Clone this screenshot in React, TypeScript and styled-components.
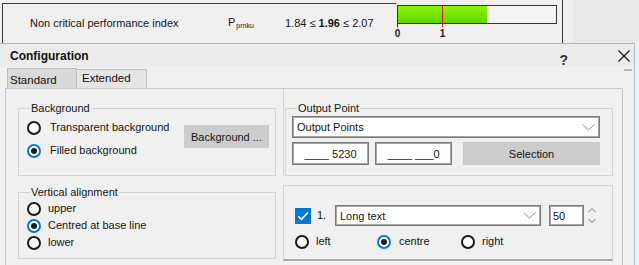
import React from "react";
import styled, { createGlobalStyle } from "styled-components";

const Global = createGlobalStyle`
  html, body { margin: 0; padding: 0; background: #f0f0f0; }
  body {
    font-family: "Liberation Sans", Arial, sans-serif;
    font-size: 11px;
    color: #151515;
  }
  * { box-sizing: border-box; }
`;

const Screen = styled.div`
  width: 639px;
  height: 265px;
  overflow: hidden;
  display: flex;
  flex-direction: column;
  background: #f0f0f0;
`;

/* ---------- report strip above the dialog ---------- */

const TopStrip = styled.div`
  height: 43px;
  flex: none;
  display: flex;
`;

const ReportFrame = styled.div`
  margin-left: 2px;
  width: 561px;
  border-right: 1px solid #3a3a3a;
  display: flex;
  align-items: flex-start;
`;

const TextCells = styled.div`
  margin-top: 3px;
  width: 394px;
  height: 40px;
  border-top: 1px solid #3a3a3a;
  border-left: 1px solid #3a3a3a;
  display: flex;
  align-items: center;
`;

const Cell = styled.div<{ $w: number; $pl?: number }>`
  width: ${(p) => p.$w}px;
  padding-left: ${(p) => p.$pl ?? 0}px;
  line-height: 13px;
  white-space: nowrap;
`;

const Sub = styled.sub`
  font-size: 7px;
  vertical-align: -2px;
  margin-left: 1px;
`;

const Strong = styled.b`
  font-weight: bold;
`;

const BarCell = styled.div`
  margin-left: 1px;
  padding-top: 5px;
  width: 160px;
`;

const RightFill = styled.div`
  flex: 1;
  margin-left: 10px;
  background: #e9e9e9;
`;

/* ---------- dialog ---------- */

const Dialog = styled.div`
  width: 635px;
  flex: 1;
  border-top: 1px solid #a9b8cf;
  border-right: 1px solid #a9c1e0;
  display: flex;
  flex-direction: column;
`;

const TitleBar = styled.div`
  height: 23px;
  flex: none;
  background: #ebebeb;
  display: flex;
  align-items: center;
  padding: 0 4px 0 10px;
`;

const Title = styled.div`
  font-weight: bold;
  font-size: 12px;
  color: #111;
`;

const Help = styled.div`
  margin-left: auto;
  font-weight: bold;
  font-size: 14px;
  line-height: 14px;
  padding-top: 9px;
  color: #333;
`;

const CloseBox = styled.div`
  margin-left: 50px;
  margin-top: 1px;
  width: 12px;
  height: 12px;
  display: flex;
`;

const TabStrip = styled.div`
  height: 21px;
  flex: none;
  display: flex;
  align-items: flex-end;
  padding-left: 7px;
`;

const Tab = styled.div<{ $active?: boolean }>`
  width: 70px;
  height: ${(p) => (p.$active ? 20 : 19)}px;
  background: ${(p) => (p.$active ? "#d9d9d9" : "#e5e5e5")};
  border: 1px solid #bdbdbd;
  border-bottom: none;
  border-left: ${(p) => (p.$active ? "1px solid #bdbdbd" : "none")};
  display: flex;
  align-items: flex-end;
  padding-left: ${(p) => (p.$active ? 2 : 5)}px;
  padding-bottom: ${(p) => (p.$active ? 1 : 3)}px;
  line-height: 13px;
  font-size: 11.5px;
  color: #111;
`;

const GripDash = styled.div`
  margin-left: auto;
  margin-right: 2px;
  align-self: flex-start;
  margin-top: 2px;
  width: 8px;
  height: 2px;
  background: #b8b8b8;
`;

const TabPanel = styled.div`
  margin-left: 5px;
  width: 618px;
  flex: 1;
  border: 1px solid #c6c6c6;
  border-bottom: none;
  display: grid;
  grid-template-columns: 258px 330px;
  column-gap: 7px;
  align-content: start;
  padding-left: 12px;
`;

const Column = styled.div`
  display: flex;
  flex-direction: column;
`;

const LeftColumn = styled(Column)`
  padding-top: 19px;
`;

const GroupBox = styled.div<{ $h: number; $mt?: number; $w?: number; $pl?: number }>`
  position: relative;
  height: ${(p) => p.$h}px;
  width: ${(p) => (p.$w ? `${p.$w}px` : "auto")};
  margin-top: ${(p) => p.$mt ?? 0}px;
  border: 1px solid #d4d4d4;
  padding: 7px 6px 0 ${(p) => p.$pl ?? 8}px;
`;

const Legend = styled.span`
  position: absolute;
  top: -8px;
  left: 11px;
  padding: 0 1px;
  line-height: 14px;
  background: #f0f0f0;
  color: #151515;
`;

const GroupInner = styled.div`
  display: flex;
  justify-content: space-between;
  align-items: flex-start;
`;

const RadioStack = styled.div`
  display: flex;
  flex-direction: column;
`;

const RadioRow = styled.div<{ $h: number; $gap: number }>`
  height: ${(p) => p.$h}px;
  display: flex;
  align-items: center;
  gap: ${(p) => p.$gap}px;
  white-space: nowrap;
  line-height: 13px;
`;

const RadioCircle = styled.span<{ $on?: boolean }>`
  flex: none;
  width: 14px;
  height: 14px;
  border-radius: 50%;
  border: 2px solid ${(p) => (p.$on ? "#0078d7" : "#1a1a1a")};
  background: #fff;
  display: flex;
  align-items: center;
  justify-content: center;
  &::after {
    content: "";
    display: ${(p) => (p.$on ? "block" : "none")};
    width: 6px;
    height: 6px;
    border-radius: 50%;
    background: #1a1a1a;
  }
`;

const FlatButton = styled.div<{ $w: number; $mt?: number; $ml?: number }>`
  flex: none;
  width: ${(p) => p.$w}px;
  height: 23px;
  margin-top: ${(p) => p.$mt ?? 0}px;
  margin-left: ${(p) => p.$ml ?? 0}px;
  background: #cccccc;
  border: 1px solid #cccccc;
  display: flex;
  align-items: center;
  justify-content: center;
  color: #151515;
`;

const TopRight = styled.div`
  height: 87px;
  border-left: 1px solid #d4d4d4;
  padding: 19px 0 0 1px;
`;

const Field = styled.div<{ $w: number; $h: number; $ml?: number; $pl?: number }>`
  flex: none;
  width: ${(p) => p.$w}px;
  height: ${(p) => p.$h}px;
  margin-left: ${(p) => p.$ml ?? 0}px;
  background: #fff;
  border: 1px solid #7a7a7a;
  box-shadow: inset 0 0 0 1px #a6a6a6;
  display: flex;
  align-items: center;
  padding: 0 4px 0 ${(p) => p.$pl ?? 4}px;
  white-space: nowrap;
  color: #151515;
`;

const ComboText = styled.span`
  flex: 1;
`;

const CenterText = styled.span`
  flex: 1;
  text-align: center;
`;

const FieldRow = styled.div`
  margin-top: 4px;
  display: flex;
  align-items: center;
  gap: 6px;
`;

const LowerBox = styled.div`
  margin-top: 9px;
  height: 76px;
  border: 1px solid #d4d4d4;
  border-bottom: 2px solid #ababab;
  padding: 19px 0 0 11px;
`;

const LineRow = styled.div`
  height: 21px;
  display: flex;
  align-items: center;
`;

const NumLabel = styled.span`
  margin-left: 6px;
  width: 18px;
  line-height: 13px;
`;

const AlignGrid = styled.div`
  margin-top: 7px;
  display: grid;
  grid-template-columns: 82px 84px auto;
`;

const Chevron = () => (
  <svg width="13" height="7" viewBox="0 0 13 7">
    <polyline points="0.5,0.5 6.5,6 12.5,0.5" fill="none" stroke="#8c8c8c" strokeWidth="1" />
  </svg>
);

const Spinner = () => (
  <svg width="8" height="17" viewBox="0 0 8 17" style={{ marginLeft: 4 }}>
    <polyline points="0.5,5 4,1.5 7.5,5" fill="none" stroke="#a8a8a8" strokeWidth="1.2" />
    <polyline points="0.5,12 4,15.5 7.5,12" fill="none" stroke="#a8a8a8" strokeWidth="1.2" />
  </svg>
);

const CheckBox = () => (
  <svg width="16" height="16" viewBox="0 0 16 16">
    <rect x="0" y="0" width="16" height="16" fill="#0078d7" />
    <polyline points="3.2,8.2 6.4,11.4 12.8,4.6" fill="none" stroke="#fff" strokeWidth="1.6" />
  </svg>
);

const Radio = ({ on, label, h, gap }: { on?: boolean; label: string; h: number; gap: number }) => (
  <RadioRow $h={h} $gap={gap}>
    <RadioCircle $on={on} />
    <span>{label}</span>
  </RadioRow>
);

const PerformanceBar = () => (
  <svg width="160" height="38" viewBox="0 0 160 38" style={{ overflow: "visible", display: "block" }}>
    <defs>
      <linearGradient id="gbar" x1="0" y1="0" x2="0" y2="1">
        <stop offset="0" stopColor="#8cf500" />
        <stop offset="1" stopColor="#5fd600" />
      </linearGradient>
    </defs>
    <rect x="0.5" y="0.5" width="159" height="18" fill="#f4f4f4" stroke="#333" />
    <rect x="1" y="1" width="89" height="17" fill="url(#gbar)" />
    <line x1="45.5" y1="1" x2="45.5" y2="22.5" stroke="#e01818" strokeWidth="1" />
    <line x1="0.5" y1="18" x2="0.5" y2="22.5" stroke="#333" strokeWidth="1" />
    <text x="0.5" y="32" fontSize="10" fontWeight="bold" textAnchor="middle" fill="#222"
      fontFamily="Liberation Sans, Arial, sans-serif">0</text>
    <text x="45.5" y="32" fontSize="10" fontWeight="bold" textAnchor="middle" fill="#222"
      fontFamily="Liberation Sans, Arial, sans-serif">1</text>
  </svg>
);

export default function App() {
  return (
    <>
      <Global />
      <Screen>
        <TopStrip>
          <ReportFrame>
            <TextCells>
              <Cell $w={225} $pl={27}>Non critical performance index</Cell>
              <Cell $w={57}>
                P<Sub>prnku</Sub>
              </Cell>
              <Cell $w={111}>
                1.84 ≤ <Strong>1.96</Strong> ≤ 2.07
              </Cell>
            </TextCells>
            <BarCell>
              <PerformanceBar />
            </BarCell>
          </ReportFrame>
          <RightFill />
        </TopStrip>

        <Dialog>
          <TitleBar>
            <Title>Configuration</Title>
            <Help>?</Help>
            <CloseBox>
              <svg width="12" height="12" viewBox="0 0 12 12">
                <line x1="0.5" y1="0.5" x2="11.5" y2="11.5" stroke="#1e1e1e" strokeWidth="1.3" />
                <line x1="11.5" y1="0.5" x2="0.5" y2="11.5" stroke="#1e1e1e" strokeWidth="1.3" />
              </svg>
            </CloseBox>
          </TitleBar>

          <TabStrip>
            <Tab $active>Standard</Tab>
            <Tab>Extended</Tab>
            <GripDash />
          </TabStrip>

          <TabPanel>
            <LeftColumn>
              <GroupBox $h={68}>
                <Legend>Background</Legend>
                <GroupInner>
                  <RadioStack>
                    <Radio label="Transparent background" h={23} gap={9} />
                    <Radio on label="Filled background" h={23} gap={9} />
                  </RadioStack>
                  <FlatButton $w={85} $mt={9}>Background ...</FlatButton>
                </GroupInner>
              </GroupBox>

              <GroupBox $h={67} $mt={16}>
                <Legend>Vertical alignment</Legend>
                <RadioStack>
                  <Radio label="upper" h={17} gap={7} />
                  <Radio on label="Centred at base line" h={17} gap={7} />
                  <Radio label="lower" h={17} gap={7} />
                </RadioStack>
              </GroupBox>
            </LeftColumn>

            <Column>
              <TopRight>
                <GroupBox $h={68} $w={328} $pl={6}>
                  <Legend>Output Point</Legend>
                  <Field $w={308} $h={22}>
                    <ComboText>Output Points</ComboText>
                    <Chevron />
                  </Field>
                  <FieldRow>
                    <Field $w={77} $h={23}>
                      <CenterText>____ 5230</CenterText>
                    </Field>
                    <Field $w={77} $h={23}>
                      <CenterText>____ ___0</CenterText>
                    </Field>
                    <FlatButton $w={137} $ml={5}>Selection</FlatButton>
                  </FieldRow>
                </GroupBox>
              </TopRight>

              <LowerBox>
                <LineRow>
                  <CheckBox />
                  <NumLabel>1.</NumLabel>
                  <Field $w={206} $h={21}>
                    <ComboText>Long text</ComboText>
                    <Chevron />
                  </Field>
                  <Field $w={35} $h={21} $ml={8} $pl={3}>
                    <ComboText>50</ComboText>
                  </Field>
                  <Spinner />
                </LineRow>
                <AlignGrid>
                  <Radio label="left" h={17} gap={7} />
                  <Radio on label="centre" h={17} gap={8} />
                  <Radio label="right" h={17} gap={7} />
                </AlignGrid>
              </LowerBox>
            </Column>
          </TabPanel>
        </Dialog>
      </Screen>
    </>
  );
}
